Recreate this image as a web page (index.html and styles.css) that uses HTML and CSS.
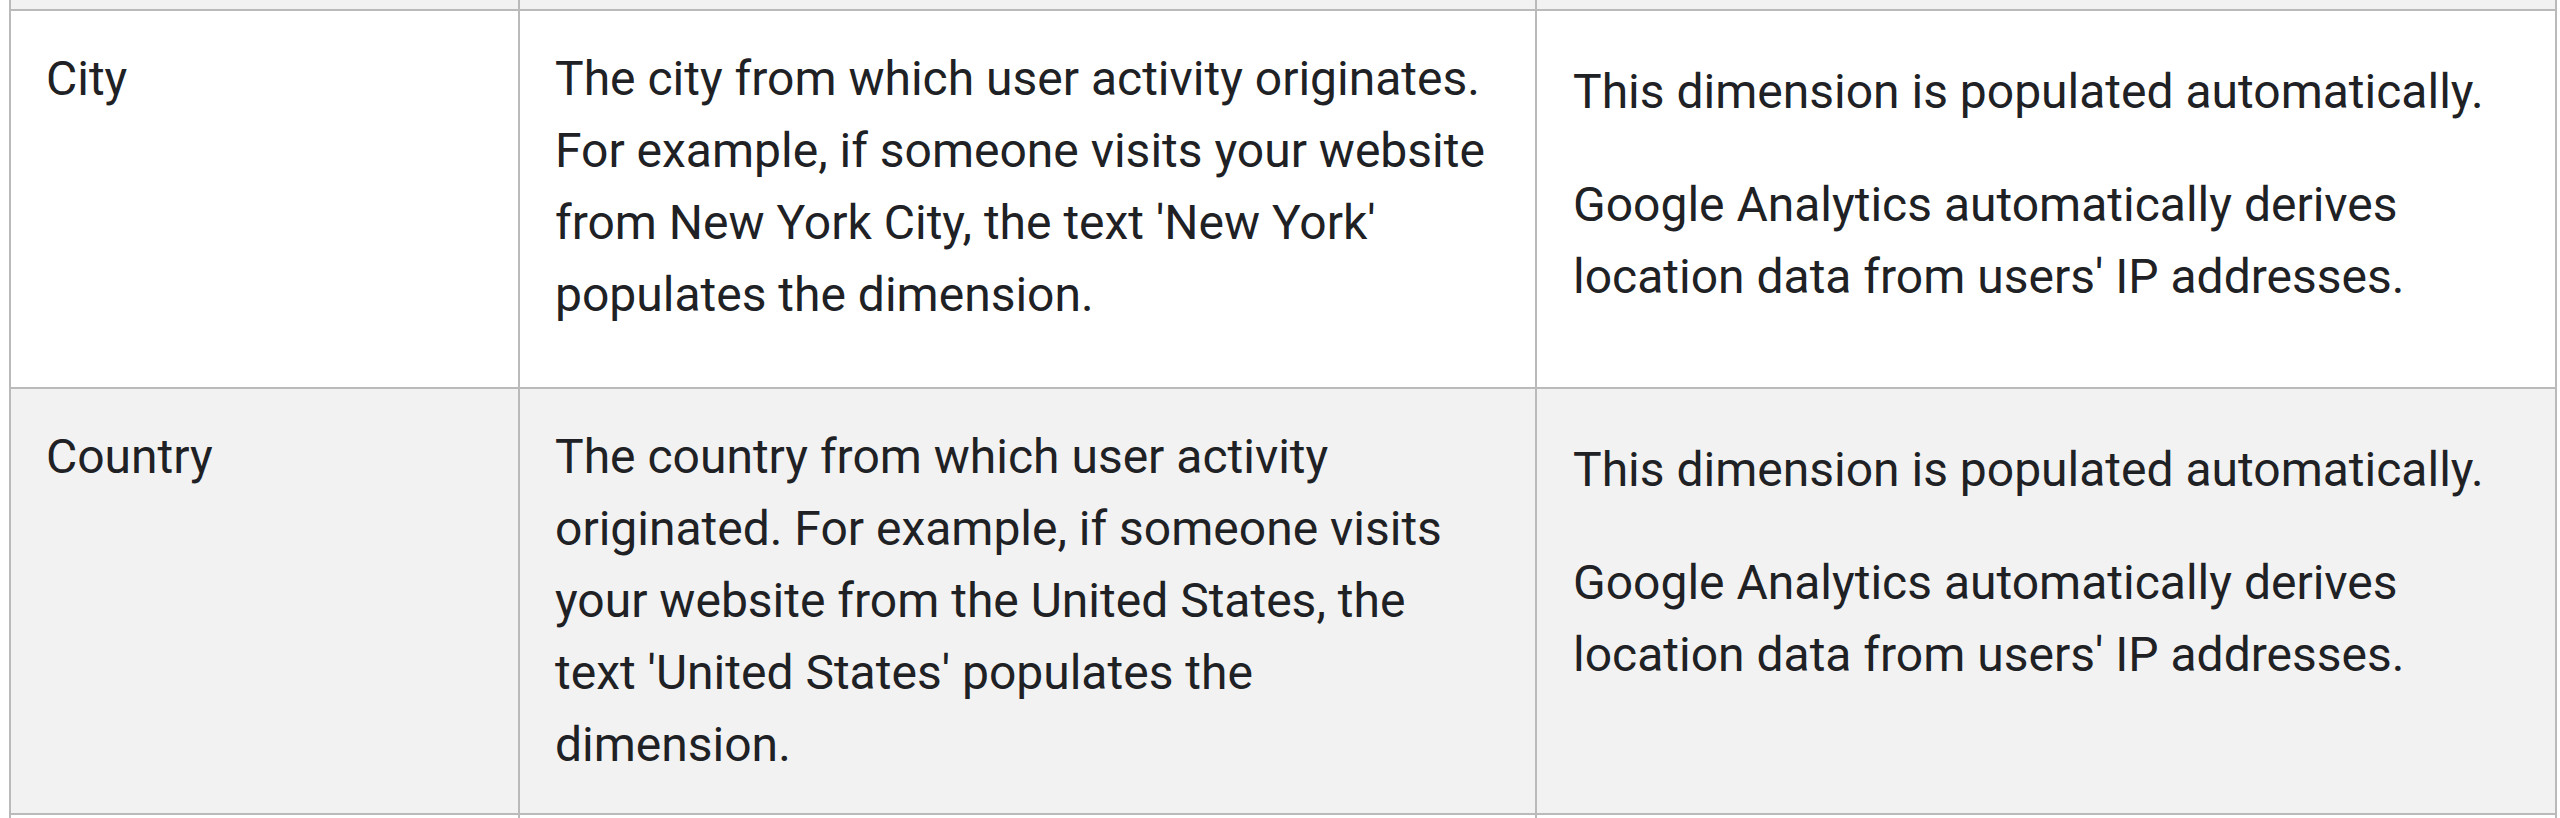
FILE: index.html
```html
<!DOCTYPE html>
<html lang="en">
<head>
<meta charset="utf-8">
<title>Dimensions</title>
<link rel="stylesheet" href="styles.css">
</head>
<body>
<div class="table">
  <div class="row row-gray row-cut">
    <div class="cell c1"></div>
    <div class="cell c2"></div>
    <div class="cell c3"></div>
  </div>
  <div class="row row-white">
    <div class="cell c1">City</div>
    <div class="cell c2">The city from which user activity originates. For example, if someone visits your website from New York City, the text 'New York' populates the dimension.</div>
    <div class="cell c3">
      <p>This dimension is populated automatically.</p>
      <p>Google Analytics automatically derives location data from users' IP addresses.</p>
    </div>
  </div>
  <div class="row row-gray">
    <div class="cell c1">Country</div>
    <div class="cell c2">The country from which user activity originated. For example, if someone visits your website from the United States, the text 'United States' populates the dimension.</div>
    <div class="cell c3">
      <p>This dimension is populated automatically.</p>
      <p>Google Analytics automatically derives location data from users' IP addresses.</p>
    </div>
  </div>
  <div class="row row-white row-cut">
    <div class="cell c1"></div>
    <div class="cell c2"></div>
    <div class="cell c3"></div>
  </div>
</div>
</body>
</html>
```

FILE: styles.css
```css
html, body {
  margin: 0;
  padding: 0;
  background: #ffffff;
  overflow: hidden;
}

body {
  font-family: Roboto, "Liberation Sans", Arial, sans-serif;
  font-size: 48px;
  line-height: 72px;
  color: #202124;
}

.table {
  margin-left: 9px;
  width: 2548px;
}

.row {
  display: grid;
  grid-template-columns: 509px 1017px 1022px;
  border-top: 2px solid #bababa;
}

.row-gray {
  background: #f2f2f2;
}

.row-white {
  background: #ffffff;
}

.row-cut {
  height: 9px;
}

.row-cut:first-child {
  border-top: none;
}

.cell {
  border-left: 2px solid #bababa;
  padding: 32px 30px 32px 35px;
}

.cell.c2 {
  padding-right: 44px;
}

.row-cut .cell {
  padding: 0;
}

.cell.c3 {
  border-right: 2px solid #bababa;
  padding-left: 36px;
}

.cell p {
  margin: 0 0 41px;
}

.cell p:first-child {
  margin-top: 13px;
}

.cell p:last-child {
  margin-bottom: 42px;
}
```
